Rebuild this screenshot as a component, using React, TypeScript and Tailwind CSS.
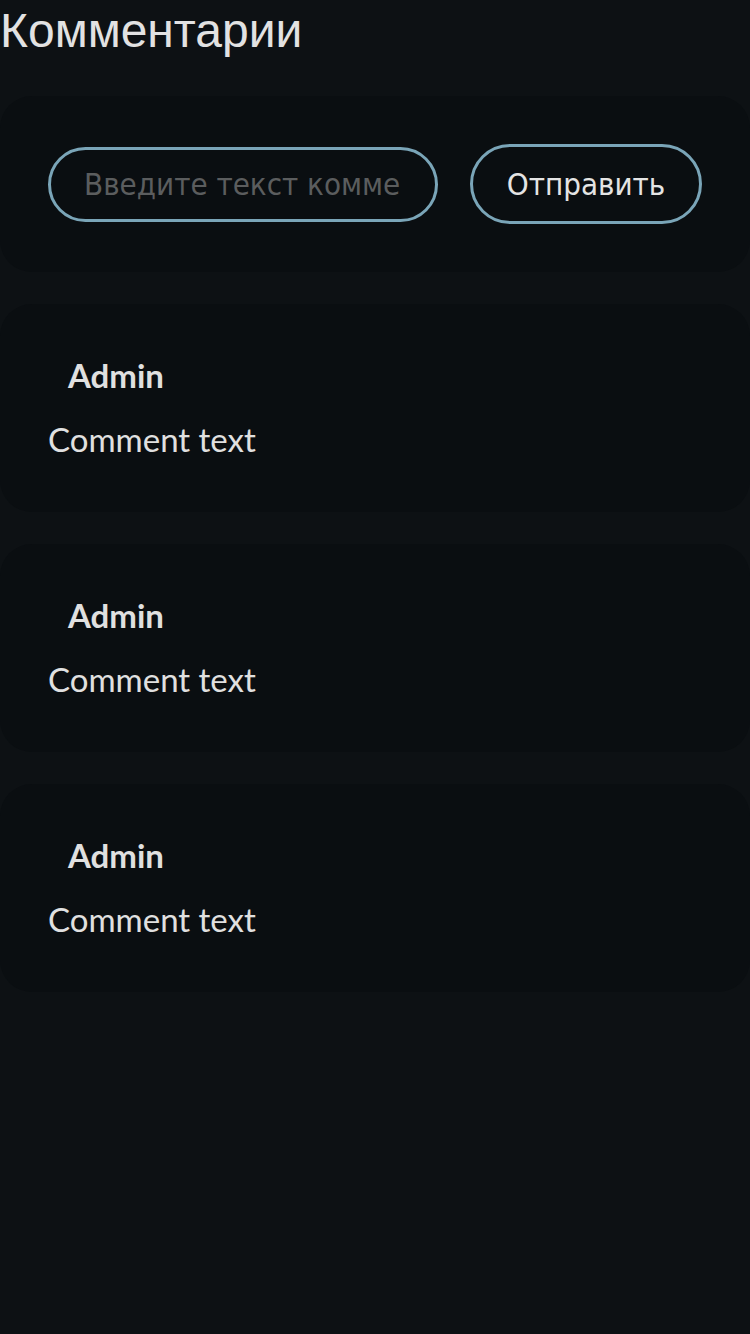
import * as React from 'react';

const comments = [
  { id: 1, author: 'Admin', text: 'Comment text' },
  { id: 2, author: 'Admin', text: 'Comment text' },
  { id: 3, author: 'Admin', text: 'Comment text' },
];

export default function App() {
  const [value, setValue] = React.useState('');

  return (
    <div className="min-h-[1334px] w-[750px] bg-[#0d1114] flex flex-col gap-8 pb-8">
      {/* Header */}
      <h1 className="h-[64px] text-[48px] leading-[61px] text-[#e2e2e2] font-['Liberation_Sans',Arial,sans-serif]">
        Комментарии
      </h1>

      {/* Form */}
      <div className="bg-[#0a0e11] rounded-[32px] px-12 py-12 flex items-center gap-8">
        <input
          value={value}
          onChange={(e) => setValue(e.target.value)}
          placeholder="Введите текст комментария"
          className="w-[390px] h-[75px] rounded-full border-[3px] border-[#7aa5b8] bg-transparent pl-[33px] pr-[34px] text-[31px] text-[#e0e0e0] placeholder:text-[#5b5d5e] outline-none font-['DejaVu_Sans_Condensed','DejaVu_Sans',sans-serif] font-stretch-condensed"
        />
        <button className="w-[232px] h-[80px] rounded-full border-[3px] border-[#7aa5b8] text-[31px] text-[#e4e4e4] font-['DejaVu_Sans_Condensed','DejaVu_Sans',sans-serif] font-stretch-condensed">
          Отправить
        </button>
      </div>

      {/* Comments */}
      {comments.map((c) => (
        <div key={c.id} className="bg-[#0a0e11] rounded-[32px] px-12 py-12 flex flex-col gap-4 font-['Lato',sans-serif]">
          <div className="pl-5 h-12 flex items-center text-[33px] font-bold text-[#e0e0e0]">{c.author}</div>
          <div className="h-12 flex items-center text-[33px] text-[#e0e0e0]">{c.text}</div>
        </div>
      ))}
    </div>
  );
}
